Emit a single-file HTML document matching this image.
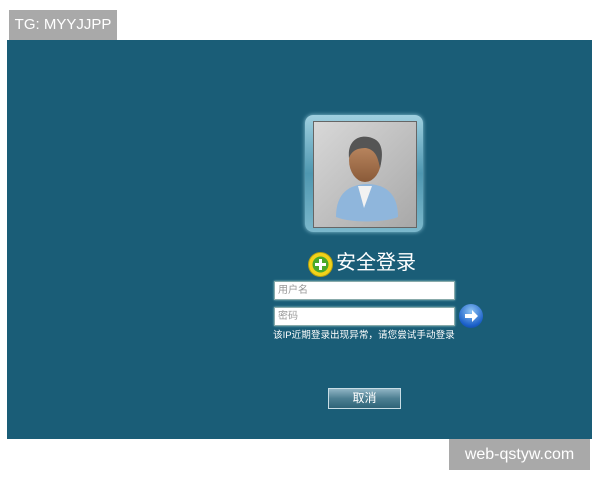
<!DOCTYPE html>
<html><head><meta charset="utf-8"><style>
body{margin:0;width:600px;height:480px;background:#fff;position:relative;overflow:hidden;font-family:"Liberation Sans","Noto Sans CJK SC",sans-serif}
.tag{position:absolute;left:9px;top:10px;width:108px;height:30px;background:#a9a9a9;color:#fff;font-size:15px;line-height:30px;text-align:center}
.panel{position:absolute;left:7px;top:40px;width:585px;height:399px;background:#1a5d77}
.wm{position:absolute;left:449px;top:439px;width:141px;height:31px;background:#a9a9a9;color:#fff;font-size:16px;line-height:31px;text-align:center}
.frame{position:absolute;left:305px;top:115px;width:118px;height:117px;border-radius:8px;background:linear-gradient(#9fd0e0,#4f97b0 50%,#7bb8cc);box-shadow:0 0 4px #8cc6d8}
.inner{position:absolute;left:8px;top:6px;width:102px;height:105px;background:linear-gradient(135deg,#d8d8d8,#a8a8a8);border:1px solid #666}
.title{position:absolute;top:250px;color:#fff;font-size:20px;line-height:26px}
.ic{position:absolute;left:308px;top:252px;width:23px;height:23px;border-radius:50%;background:#f2d21a;border:1px solid #b5a010}
.inp{position:absolute;left:274px;background:#fff;border:1px solid #8aa;box-shadow:0 0 2px #9cc;color:#999;font-size:10px;line-height:17px;padding-left:3px;box-sizing:border-box;width:181px;height:19px}
.hint{position:absolute;left:273px;top:329px;color:#fff;font-size:9.6px;line-height:13px;white-space:nowrap}
.arr{position:absolute;left:459px;top:304px;width:24px;height:24px;border-radius:50%;background:radial-gradient(circle at 50% 30%,#8ec4f4,#1a5fc8 70%,#0e3d8c);}
.btn{position:absolute;left:328px;top:388px;width:73px;height:21px;background:linear-gradient(#8fb4c4,#4d7f92 50%,#2f6478);border:1px solid #c8dde5;box-sizing:border-box;color:#fff;font-size:12px;line-height:19px;text-align:center}
</style></head><body>
<div class="tag">TG: MYYJJPP</div>
<div class="panel"></div>
<div class="wm">web-qstyw.com</div>
<div class="frame"><div class="inner">
<svg width="102" height="105" viewBox="0 0 102 105">
<defs><linearGradient id="s" x1="0" x2="0" y1="0" y2="1"><stop offset="0" stop-color="#c49068"/><stop offset="1" stop-color="#8a5a38"/></linearGradient></defs>
<path d="M22 95 C22 70 36 63 52 62 C70 62 84 70 84 95 C70 101 36 101 22 95Z" fill="#8fb6dc"/>
<path d="M44 64 L50 86 L58 64Z" fill="#f2f2f2"/>
<ellipse cx="51" cy="38" rx="16" ry="22" fill="url(#s)"/>
<path d="M35 36 C33 16 48 12 58 16 C68 19 70 30 66 46 C64 36 62 28 52 26 C44 26 38 28 35 36Z" fill="#555"/>
</svg></div></div>
<div class="ic"><svg width="23" height="23"><circle cx="11.5" cy="11.5" r="8" fill="#4aa82a"/><path d="M11.5 6v11M6 11.5h11" stroke="#fff" stroke-width="3"/></svg></div>
<div class="title" style="left:336px">安全登录</div>
<div class="inp" style="top:281px">用户名</div>
<div class="inp" style="top:307px">密码</div>
<div class="arr"><svg width="24" height="24"><path d="M6 10h7v-4l6 6-6 6v-4h-7z" fill="#fff"/></svg></div>
<div class="hint">该IP近期登录出现异常，请您尝试手动登录</div>
<div class="btn">取消</div>
</body></html>
